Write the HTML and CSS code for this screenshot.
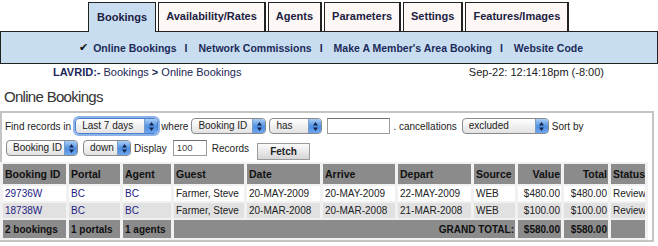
FILE: index.html
```
<!DOCTYPE html>
<html>
<head>
<meta charset="utf-8">
<title>Online Bookings</title>
<link rel="stylesheet" href="styles.css">
</head>
<body>
<div class="tabs">
  <div class="tab active">Bookings</div>
  <div class="tab">Availability/Rates</div>
  <div class="tab">Agents</div>
  <div class="tab">Parameters</div>
  <div class="tab">Settings</div>
  <div class="tab">Features/Images</div>
</div>
<div class="subnav">
  <span class="check">✔</span>
  <span>Online Bookings</span><span class="sep">I</span>
  <span>Network Commissions</span><span class="sep">I</span>
  <span>Make A Member's Area Booking</span><span class="sep">I</span>
  <span>Website Code</span>
</div>
<div class="crumbs">
  <span class="trail"><b>LAVRID:-</b> Bookings <b>&gt;</b> Online Bookings</span>
  <span class="clock">Sep-22: 12:14:18pm (-8:00)</span>
</div>
<h1 class="title">Online Bookings</h1>
<div class="panel">
  <div class="frow row1">
    <span>Find records in</span>
    <span class="sel sel-period focus"><span class="sel-text">Last 7 days</span><span class="sel-arrow"><svg width="7" height="11" viewBox="0 0 7 11"><path d="M3.5 1 L6 4.5 L1 4.5Z M1 6.5 L6 6.5 L3.5 10Z" fill="#15244a"/></svg></span></span>
    <span>where</span>
    <span class="sel sel-field"><span class="sel-text">Booking ID</span><span class="sel-arrow"><svg width="7" height="11" viewBox="0 0 7 11"><path d="M3.5 1 L6 4.5 L1 4.5Z M1 6.5 L6 6.5 L3.5 10Z" fill="#15244a"/></svg></span></span>
    <span class="sel sel-op"><span class="sel-text">has</span><span class="sel-arrow"><svg width="7" height="11" viewBox="0 0 7 11"><path d="M3.5 1 L6 4.5 L1 4.5Z M1 6.5 L6 6.5 L3.5 10Z" fill="#15244a"/></svg></span></span>
    <span class="inp inp-query"></span>
    <span>. cancellations</span>
    <span class="sel sel-cancel"><span class="sel-text">excluded</span><span class="sel-arrow"><svg width="7" height="11" viewBox="0 0 7 11"><path d="M3.5 1 L6 4.5 L1 4.5Z M1 6.5 L6 6.5 L3.5 10Z" fill="#15244a"/></svg></span></span>
    <span>Sort by</span>
  </div>
  <div class="frow row2">
    <span class="sel sel-sort"><span class="sel-text">Booking ID</span><span class="sel-arrow"><svg width="7" height="11" viewBox="0 0 7 11"><path d="M3.5 1 L6 4.5 L1 4.5Z M1 6.5 L6 6.5 L3.5 10Z" fill="#15244a"/></svg></span></span>
    <span class="sel sel-dir"><span class="sel-text">down</span><span class="sel-arrow"><svg width="7" height="11" viewBox="0 0 7 11"><path d="M3.5 1 L6 4.5 L1 4.5Z M1 6.5 L6 6.5 L3.5 10Z" fill="#15244a"/></svg></span></span>
    <span>Display</span>
    <span class="inp inp-count">100</span>
    <span class="records">Records</span>
    <span class="btn">Fetch</span>
  </div>
  <table class="grid">
    <colgroup>
      <col class="c-id"><col class="c-portal"><col class="c-agent"><col class="c-guest"><col class="c-date"><col class="c-arrive"><col class="c-depart"><col class="c-source"><col class="c-value"><col class="c-total"><col class="c-status">
    </colgroup>
    <thead>
      <tr><th>Booking ID</th><th>Portal</th><th>Agent</th><th>Guest</th><th>Date</th><th>Arrive</th><th>Depart</th><th>Source</th><th class="num">Value</th><th class="num">Total</th><th>Status</th></tr>
    </thead>
    <tbody>
      <tr class="r1"><td><a href="#">29736W</a></td><td><a href="#">BC</a></td><td><a href="#">BC</a></td><td>Farmer, Steve</td><td>20-MAY-2009</td><td>20-MAY-2009</td><td>22-MAY-2009</td><td>WEB</td><td class="num">$480.00</td><td class="num">$480.00</td><td>Review</td></tr>
      <tr class="r2"><td><a href="#">18738W</a></td><td><a href="#">BC</a></td><td><a href="#">BC</a></td><td>Farmer, Steve</td><td>20-MAR-2008</td><td>20-MAR-2008</td><td>21-MAR-2008</td><td>WEB</td><td class="num">$100.00</td><td class="num">$100.00</td><td>Review</td></tr>
    </tbody>
    <tfoot>
      <tr><td>2 bookings</td><td>1 portals</td><td>1 agents</td><td colspan="5" class="num">GRAND TOTAL:</td><td class="num">$580.00</td><td class="num">$580.00</td><td></td></tr>
    </tfoot>
  </table>
</div>
</body>
</html>
```
FILE: styles.css
```
* { box-sizing: border-box; }
body {
  margin: 0;
  width: 658px;
  font-family: "Liberation Sans", Arial, Helvetica, sans-serif;
  font-size: 11px;
  color: #222;
  background: #fff;
}
.tabs {
  display: flex;
  gap: 2px;
  height: 31px;
  padding: 2px 0 0 88px;
}
.tab {
  display: flex;
  align-items: center;
  padding: 0 7px 2px;
  border: 1px solid #222;
  border-right-width: 2px;
  border-bottom: none;
  background: #fdf7f5;
  color: #1b2142;
  font-weight: bold;
  font-size: 11px;
}
.tab.active {
  background: #c8def0;
  border-right-width: 1px;
  padding: 0 8px 2px;
  height: 30px;
  position: relative;
  z-index: 1;
}
.subnav {
  height: 33px;
  border: 1px solid #222;
  background: #c8def0;
  display: flex;
  align-items: center;
  justify-content: center;
  font-weight: bold;
  font-size: 10.5px;
  color: #1c2a5a;
  padding-left: 4px;
}
.check {
  font-family: "DejaVu Sans", sans-serif;
  font-size: 11px;
  color: #111;
  margin-right: 5px;
}
.sep { margin: 0 11px 0 8px; }
.crumbs {
  display: flex;
  justify-content: space-between;
  height: 17px;
  line-height: 17px;
  padding: 0 54px 0 53px;
  color: #1c2658;
  font-size: 11px;
}
.crumbs .clock { color: #222; }
.title {
  margin: 6px 0 4px;
  padding-left: 4px;
  font-size: 15px;
  line-height: 20px;
  font-weight: normal;
  letter-spacing: -0.7px;
  color: #333;
}
.panel {
  border: 2px solid #c4c4c4;
  margin-right: 4px;
  padding-top: 3px;
  font-size: 10px;
}
.frow {
  display: flex;
  align-items: center;
  gap: 3px;
  color: #222;
}
.row1 { height: 22px; padding: 0 0 2px 3px; }
.row2 { height: 24px; padding: 0 0 4px 4px; }
.sel {
  display: inline-flex;
  height: 16px;
  border: 1px solid #8a8a8a;
  border-radius: 4px;
  background: linear-gradient(#ffffff, #e2e2e2);
  overflow: hidden;
  font-size: 10px;
  color: #222;
}
.sel.focus {
  border-color: #4a7fcf;
  box-shadow: 0 0 0 2px #8cb2e6;
}
.sel-text {
  flex: 1;
  padding-left: 6px;
  line-height: 14px;
  white-space: nowrap;
  overflow: hidden;
}
.sel-arrow {
  width: 13px;
  display: flex;
  align-items: center;
  justify-content: center;
  border-left: 1px solid #7a9cc8;
  background: linear-gradient(#a9cdf7, #4f8fe2 55%, #6ea6ee);
}
.sel-period { width: 83px; margin-left: 1px; }
.sel-field { width: 75px; }
.sel-op { width: 53px; }
.sel-cancel { width: 87px; margin-left: 2px; }
.sel-sort { width: 72px; }
.sel-dir { width: 48px; margin-left: 2px; }
.inp {
  display: inline-block;
  height: 16px;
  border: 1px solid #9a9a9a;
  border-top-color: #6f6f6f;
  background: #fff;
  font-size: 9.5px;
  line-height: 14px;
  padding: 0 3px;
  color: #444;
}
.inp-query { width: 63px; margin-left: 2px; }
.inp-count { width: 34px; margin-left: 3px; }
.records { margin-left: 2px; }
.btn {
  width: 53px;
  height: 17px;
  margin: 6px 0 0 5px;
  border: 1px solid #9a9a9a;
  background: linear-gradient(#fbfbfb, #d6d6d6);
  font-weight: bold;
  font-size: 10px;
  line-height: 15px;
  text-align: center;
  color: #222;
}
.grid {
  border-collapse: separate;
  border-spacing: 3px 2px;
  table-layout: fixed;
  width: 648px;
  margin-left: -2px;
  background: #f1f1f1;
  font-size: 10px;
}
.c-id { width: 63px; }
.c-portal { width: 51px; }
.c-agent { width: 48px; }
.c-guest { width: 70px; }
.c-date { width: 73px; }
.c-arrive { width: 72px; }
.c-depart { width: 73px; }
.c-source { width: 41px; }
.c-value { width: 43px; }
.c-total { width: 44px; }
.c-status { width: 34px; }
.grid th {
  height: 20px;
  padding: 0 2px;
  background: #8b8b8b;
  color: #111;
  text-align: left;
  font-weight: bold;
  font-size: 10.5px;
  white-space: nowrap;
}
.grid td {
  height: 15px;
  padding: 0 1px 0 2px;
  white-space: nowrap;
  overflow: hidden;
  color: #222;
}
.grid .r1 td { background: #fff; }
.grid .r2 td { background: #e1e1e1; }
.grid tfoot td {
  height: 18px;
  background: #8b8b8b;
  font-weight: bold;
  color: #111;
}
.grid .num { text-align: right; padding-right: 1px; }
.grid a { color: #1d2080; text-decoration: none; }
```
